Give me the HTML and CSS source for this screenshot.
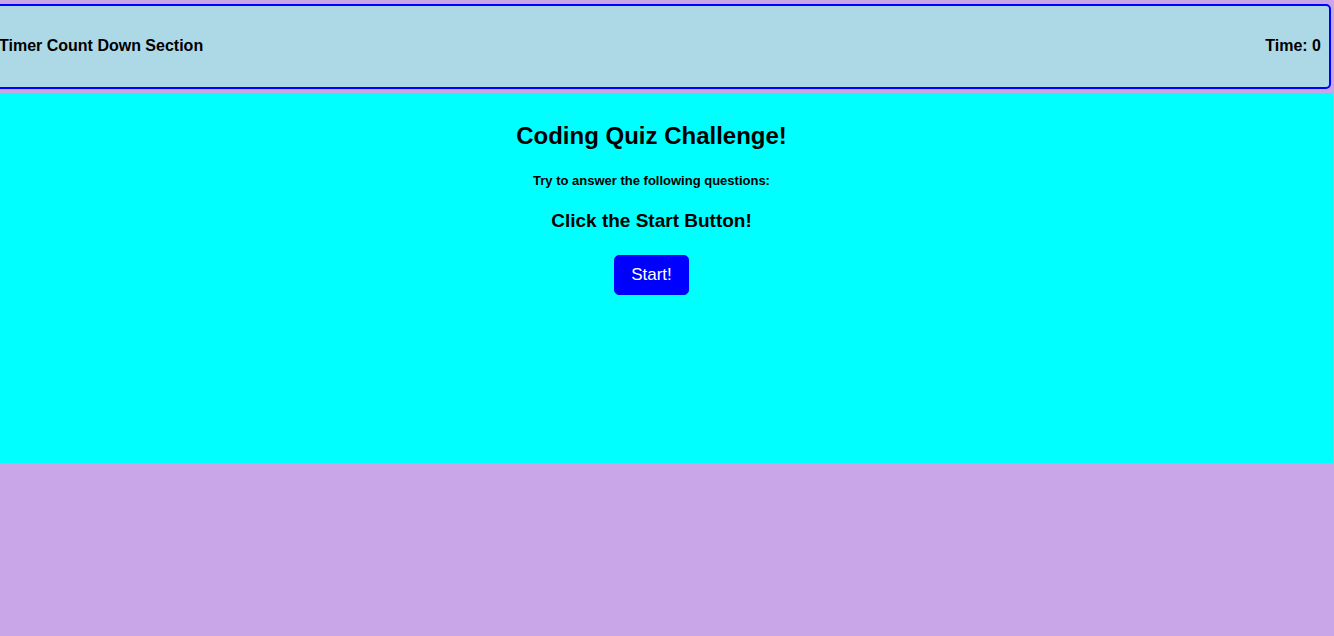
FILE: index.html
```html
<!DOCTYPE html>
<html lang="en">
<head>
<meta charset="utf-8">
<title>Coding Quiz Challenge</title>
<link rel="stylesheet" href="styles.css">
</head>
<body>
<header class="timer-bar">
<h4 class="timer-label">Timer Count Down Section</h4>
<h4 class="timer-value">Time: <span>0</span></h4>
</header>
<main class="quiz">
<h2 class="quiz-title">Coding Quiz Challenge!</h2>
<h5 class="quiz-note">Try to answer the following questions:</h5>
<h3 class="quiz-prompt">Click the Start Button!</h3>
<button class="start-button" type="button">Start!</button>
</main>
</body>
</html>
```

FILE: styles.css
```css
body {
  margin: 0;
  overflow-x: hidden;
  background: #c8a6e8;
  color: #000;
  font-family: "Liberation Sans", Arial, sans-serif;
}

.timer-bar {
  display: flex;
  justify-content: space-between;
  margin: 4px 3px 4px -11px;
  padding: 30px 8px 32px;
  border: 2px solid #0000ff;
  border-radius: 5px;
  background: lightblue;
}

.timer-label,
.timer-value {
  margin: 0;
  font-size: 16px;
  line-height: 19px;
}

.quiz {
  display: flex;
  flex-direction: column;
  align-items: center;
  min-height: 340px;
  margin-right: 1px;
  padding: 29px 30px 1px 0;
  background: #00ffff;
}

.quiz-title {
  margin: 0 0 23px;
  font-size: 24px;
  line-height: 28px;
}

.quiz-note {
  margin: 0 0 21px;
  font-size: 13px;
  line-height: 16px;
}

.quiz-prompt {
  margin: 0 0 23px;
  font-size: 19px;
  line-height: 22px;
}

.start-button {
  padding: 8px 16px;
  border: 1px solid #0000ff;
  border-radius: 5px;
  background: #0000ff;
  color: #fff;
  font-family: inherit;
  font-size: 17px;
  line-height: 22px;
}
```
